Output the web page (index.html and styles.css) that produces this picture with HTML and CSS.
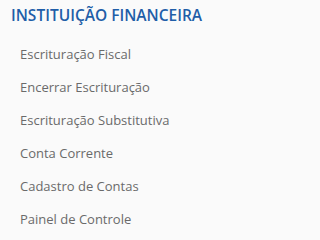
FILE: index.html
```html
<!DOCTYPE html>
<html lang="pt-BR">
<head>
<meta charset="utf-8">
<link rel="stylesheet" href="styles.css">
</head>
<body>
<nav class="menu">
  <h2 class="menu-title">INSTITUIÇÃO FINANCEIRA</h2>
  <ul class="menu-list">
    <li class="menu-item">Escrituração Fiscal</li>
    <li class="menu-item">Encerrar Escrituração</li>
    <li class="menu-item">Escrituração Substitutiva</li>
    <li class="menu-item">Conta Corrente</li>
    <li class="menu-item">Cadastro de Contas</li>
    <li class="menu-item">Painel de Controle</li>
  </ul>
</nav>
</body>
</html>
```
FILE: styles.css
```css
html, body {
  margin: 0;
  padding: 0;
  background: #fafafa;
}
.menu {
  font-family: "Open Sans", "Noto Sans", sans-serif;
  padding: 4px 0 0 11px;
}
.menu-title {
  margin: 0;
  font-size: 15.5px;
  font-weight: 600;
  color: #1f5ea8;
  line-height: 22px;
}
.menu-list {
  list-style: none;
  margin: 0;
  padding: 19px 0 0 9px;
}
.menu-item {
  font-size: 13px;
  color: #6a6a6a;
  line-height: 18px;
  margin-bottom: 15px;
}
```
